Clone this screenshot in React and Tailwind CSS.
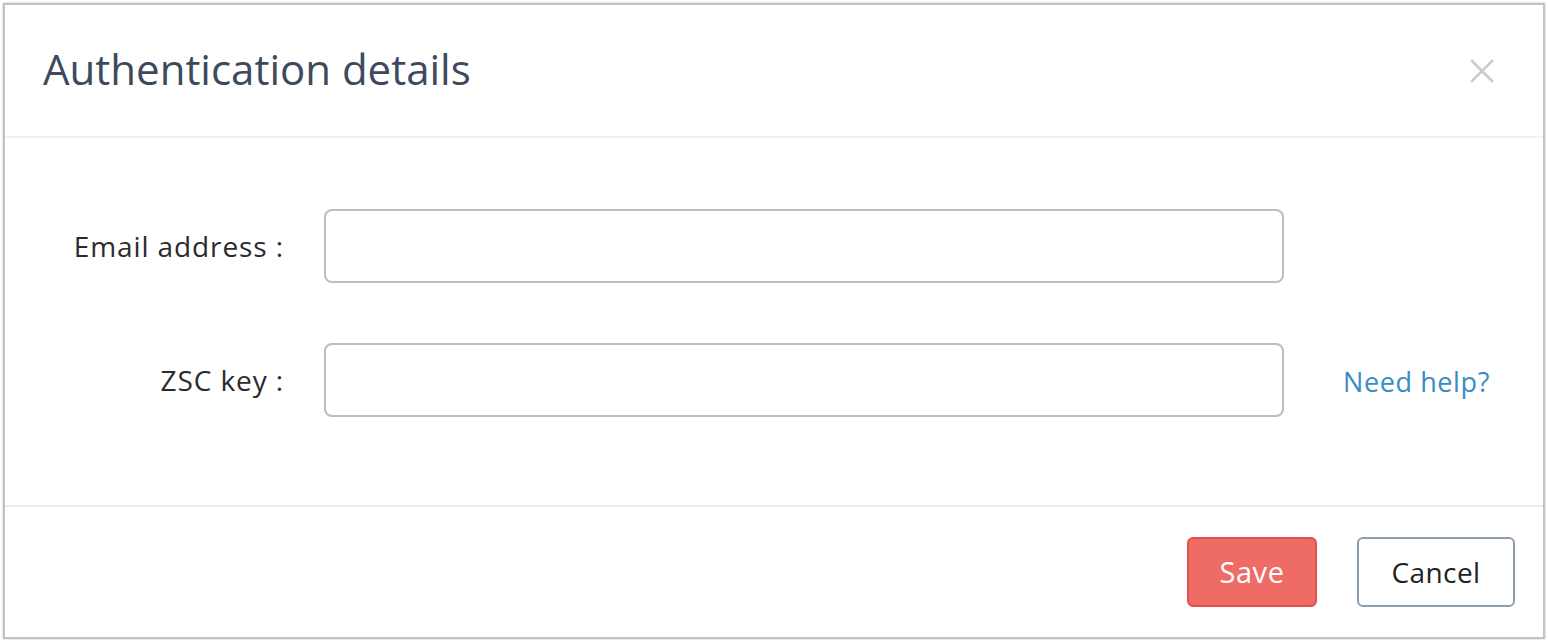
import { useState } from "react";

const AuthDialog = () => {
  const [email, setEmail] = useState("");
  const [zscKey, setZscKey] = useState("");

  return (
    <div className="w-[1548px] h-[642px] bg-white p-[3px] font-['Open_Sans',sans-serif]">
      <div className="flex flex-col h-[636px] border-2 border-[#c2c2c2] shadow-[0_0_2px_rgba(0,0,0,0.25)] bg-white">
        {/* header */}
        <div className="flex items-center justify-between h-[133px] pl-[38px] pr-[48px] border-b-2 border-[#eff3f7]">
          <h2 className="text-[42px] leading-none text-[#3d4a5d] -mt-[3px]">
            Authentication details
          </h2>
          <button className="w-[26px] h-[26px] flex items-center justify-center">
            <svg width="24" height="24" viewBox="0 0 24 24" stroke="#c8cbd0" strokeWidth="2.6" strokeLinecap="square">
              <path d="M2 2 L22 22 M22 2 L2 22" />
            </svg>
          </button>
        </div>

        {/* body */}
        <div className="flex flex-col justify-center gap-[60px] h-[367px] pb-[18px]">
          <div className="flex items-center">
            <label className="w-[279px] text-right text-[28px] tracking-[0.9px] text-[#2b2b2b]">Email address :</label>
            <input
              value={email}
              onChange={(e) => setEmail(e.target.value)}
              className="ml-[40px] w-[960px] h-[74px] border-2 border-[#bdbdbd] rounded-[8px] outline-none px-4 text-[28px]"
            />
          </div>
          <div className="flex items-center">
            <label className="w-[279px] text-right text-[28px] tracking-[0.9px] text-[#2b2b2b]">ZSC key :</label>
            <input
              value={zscKey}
              onChange={(e) => setZscKey(e.target.value)}
              className="ml-[40px] w-[960px] h-[74px] border-2 border-[#bdbdbd] rounded-[8px] outline-none px-4 text-[28px]"
            />
            <a href="#" className="ml-[59px] text-[27px] tracking-[0.6px] text-[#3a8cc6] mt-[5px]">
              Need help?
            </a>
          </div>
        </div>

        {/* footer */}
        <div className="flex items-start justify-end gap-[40px] flex-1 border-t-2 border-[#ececec] pt-[30px] pr-[28px]">
          <button className="w-[130px] h-[70px] rounded-[6px] bg-[#ee6b66] border-2 border-[#e0524c] text-white text-[29px] tracking-[0.6px]">
            Save
          </button>
          <button className="w-[158px] h-[70px] rounded-[6px] bg-white border-2 border-[#8b9bb0] text-[#222] text-[28px] tracking-[0.4px]">
            Cancel
          </button>
        </div>
      </div>
    </div>
  );
};

export default function App() {
  return <AuthDialog />;
}
